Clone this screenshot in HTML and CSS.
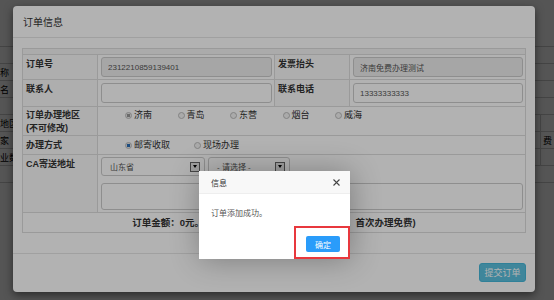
FILE: index.html
```html
<!DOCTYPE html>
<html>
  <head>
    <title>订单信息</title>
    <link rel="stylesheet" href="styles.css">
  </head>
  <body>
    <!-- page behind the modal -->
    <div class="page">
      <div class="row"><span class="l"></span></div>
      <div class="row"><span class="l">称</span></div>
      <div class="row"><span class="l">名</span></div>
      <div class="row"><span class="l"></span></div>
      <div class="row"><span class="l">地区</span><span class="r"></span></div>
      <div class="row"><span class="l">家</span><span class="r">费</span></div>
      <div class="row"><span class="l">业数</span><span class="r"></span></div>
      <div class="row"><span class="l"></span></div>
      <div class="row"><span class="l"></span></div>
    </div>
    <div class="backdrop"></div>

    <div class="modal">
      <div class="modal-header">订单信息</div>
      <div class="modal-body">
        <div class="order">
          <div class="cell head"></div>

          <div class="cell lbl">订单号</div>
          <div class="cell val"><input class="inp" value="2312210859139401" readonly></div>
          <div class="cell lbl">发票抬头</div>
          <div class="cell val"><input class="inp" value="济南免费办理测试" readonly></div>

          <div class="cell lbl">联系人</div>
          <div class="cell val"><input class="inp" value=""></div>
          <div class="cell lbl">联系电话</div>
          <div class="cell val"><input class="inp" value="13333333333"></div>

          <div class="cell lbl lbl-2">订单办理地区<br>(不可修改)</div>
          <div class="cell wide">
            <div class="opts opts-area">
              <label class="opt"><input type="radio" name="area" checked disabled>济南</label>
              <label class="opt"><input type="radio" name="area" disabled>青岛</label>
              <label class="opt"><input type="radio" name="area" disabled>东营</label>
              <label class="opt"><input type="radio" name="area" disabled>烟台</label>
              <label class="opt"><input type="radio" name="area" disabled>威海</label>
            </div>
          </div>

          <div class="cell lbl">办理方式</div>
          <div class="cell wide mid">
            <div class="opts opts-way">
              <label class="opt"><input type="radio" name="way" checked>邮寄收取</label>
              <label class="opt"><input type="radio" name="way">现场办理</label>
            </div>
          </div>

          <div class="cell lbl">CA寄送地址</div>
          <div class="cell wide addr">
            <div class="sels">
              <div class="sel sel-prov"><span>山东省</span><i class="arrow"></i></div>
              <div class="sel sel-city"><span>- 请选择 -</span><i class="arrow"></i></div>
            </div>
            <textarea class="area"></textarea>
          </div>

          <div class="cell total">订单金额：0元。（CA证书新办及年度服务费用合计，首次办理免费)</div>
        </div>
      </div>
      <div class="modal-footer">
        <button class="btn-submit">提交订单</button>
      </div>
    </div>

    <div class="shade"></div>

    <div class="layer">
      <div class="layer-title">
        信息
        <svg class="layer-close" width="7" height="7" viewBox="0 0 7 7">
          <path d="M0.5 0.5L6.5 6.5M6.5 0.5L0.5 6.5" stroke="#444" stroke-width="1.1" fill="none" />
        </svg>
      </div>
      <div class="layer-content">订单添加成功。</div>
      <div class="layer-btns"><button class="layer-btn">确定</button></div>
    </div>

    <div class="mark"></div>
  </body>
</html>
```

FILE: styles.css
```css
body {
  margin: 0;
  width: 554px;
  height: 300px;
  overflow: hidden;
  position: relative;
  background: #fff;
  font-family: "Liberation Sans", "Noto Sans CJK SC", sans-serif;
  color: #333;
}

/* Page behind */
.page {
  padding-top: 46px;
}

.row {
  display: flex;
  height: 17px;
  box-sizing: border-box;
  border-top: 1px solid #ccc;
  font-size: 9px;
  color: #000;
}

.row .l {
  white-space: nowrap;
  display: flex;
  align-items: center;
}

.row .r {
  margin-left: auto;
  width: 11px;
  border-left: 1px solid #ccc;
  padding-left: 2px;
  white-space: nowrap;
  display: flex;
  align-items: center;
}

.backdrop,
.shade {
  position: absolute;
  top: 0;
  left: 0;
  width: 100%;
  height: 100%;
}

.backdrop {
  background: rgba(0, 0, 0, 0.52);
}

.shade {
  background: rgba(0, 0, 0, 0.3);
}

/* Modal */
.modal {
  position: absolute;
  left: 13px;
  top: 6px;
  width: 522px;
  height: 286px;
  background: #fff;
  border-radius: 4px;
  box-shadow: 0 3px 9px rgba(0, 0, 0, 0.5);
  display: flex;
  flex-direction: column;
}

.modal-header {
  height: 32px;
  box-sizing: border-box;
  border-bottom: 1px solid #e5e5e5;
  padding: 0 10px;
  display: flex;
  align-items: center;
  font-size: 10px;
  color: #333;
}

.modal-body {
  flex: 1;
  padding: 10px 9px 0;
}

.modal-footer {
  border-top: 1px solid #e5e5e5;
  padding: 9px 9px 10px;
  display: flex;
  justify-content: flex-end;
}

.btn-submit {
  width: 47px;
  height: 19px;
  padding: 0;
  background: #5bc0de;
  border: 1px solid #46b8da;
  border-radius: 3px;
  color: #fff;
  font-family: "Noto Sans CJK SC", sans-serif;
  font-size: 9px;
}

/* Order table */
.order {
  display: grid;
  grid-template-columns: 75px 177px 75px 176px;
  grid-template-rows: 6px 25px 27px 29px 19px 58px 20px;
  border-top: 1px solid #ddd;
  border-left: 1px solid #ddd;
  width: 504px;
  box-sizing: border-box;
}

.cell {
  border-right: 1px solid #ddd;
  border-bottom: 1px solid #ddd;
  box-sizing: border-box;
}

.head {
  grid-column: span 4;
  background: #f5f5f5;
}

.lbl {
  background: #f9f9f9;
  font-weight: bold;
  font-size: 9px;
  line-height: 12px;
  padding: 3px 3px;
  color: #333;
}

.lbl-2 {
  padding-top: 2px;
  line-height: 13px;
}

.val {
  padding: 0 2px 0 3px;
  display: flex;
  align-items: center;
}

.inp {
  display: block;
  width: 100%;
  height: 20px;
  box-sizing: border-box;
  border: 1px solid #ccc;
  border-radius: 3px;
  padding: 0 6px;
  font-family: "Liberation Sans", "Noto Sans CJK SC", sans-serif;
  font-size: 8px;
  color: #555;
  background: #fff;
  outline: none;
}

.inp[readonly] {
  background: #eee;
}

.wide {
  grid-column: span 3;
}

.opts {
  display: flex;
  padding-left: 27px;
  font-size: 9px;
  line-height: 12px;
  color: #333;
}

.opts-area {
  padding-top: 2px;
}

.mid {
  display: flex;
  align-items: center;
}

.opt {
  display: flex;
  align-items: center;
  gap: 2px;
}

.opts-area .opt {
  width: 52.5px;
}

.opts-way .opt {
  width: 69px;
}

.opt input {
  appearance: none;
  width: 7px;
  height: 7px;
  margin: 0;
  border: 1px solid #bbb;
  border-radius: 50%;
  background: #f4f4f4;
  box-sizing: border-box;
}

.opt input:checked {
  background: radial-gradient(circle, #2a6fb8 0 1.6px, #e8e8e8 2px);
}

.opt input:checked:disabled {
  background: radial-gradient(circle, #999 0 1.6px, #eee 2px);
}

.addr {
  padding: 2px 2px 0 3px;
}

.sels {
  display: flex;
  gap: 3px;
}

.sel {
  height: 19px;
  box-sizing: border-box;
  border: 1px solid #ccc;
  border-radius: 3px;
  background: #fff;
  display: flex;
  align-items: center;
  padding: 0 4px 0 8px;
  font-size: 8px;
  color: #555;
}

.sel span {
  flex: 1;
}

.sel-prov {
  width: 104px;
}

.sel-city {
  width: 82px;
}

.arrow {
  width: 10px;
  height: 10px;
  box-sizing: border-box;
  border: 1px solid #666;
  background: #e6e6e6;
  display: flex;
  align-items: center;
  justify-content: center;
}

.arrow::after {
  content: "";
  border-left: 2.5px solid transparent;
  border-right: 2.5px solid transparent;
  border-top: 3px solid #000;
}

.area {
  display: block;
  margin-top: 7px;
  width: 100%;
  height: 27px;
  box-sizing: border-box;
  border: 1px solid #ccc;
  border-radius: 3px;
  resize: none;
  background: #fff;
}

.total {
  grid-column: span 4;
  text-align: center;
  font-weight: bold;
  font-size: 9.5px;
  line-height: 19px;
  color: #333;
  white-space: nowrap;
}

/* Layer dialog */
.layer {
  position: absolute;
  left: 199px;
  top: 171px;
  width: 151px;
  height: 88px;
  background: #fff;
  box-shadow: 1px 1px 30px rgba(0, 0, 0, 0.3);
  display: flex;
  flex-direction: column;
  font-family: "Noto Sans CJK SC", sans-serif;
}

.layer-title {
  position: relative;
  height: 23px;
  box-sizing: border-box;
  border-bottom: 1px solid #eee;
  background: #f8f8f8;
  padding-left: 12px;
  display: flex;
  align-items: center;
  font-size: 8px;
  color: #333;
}

.layer-close {
  position: absolute;
  right: 10px;
  top: 8px;
}

.layer-content {
  padding: 13px 12px 0;
  font-size: 8px;
  line-height: 12px;
  color: #555;
}

.layer-btns {
  margin-top: auto;
  padding: 0 10px 7px;
  display: flex;
  justify-content: flex-end;
}

.layer-btn {
  width: 34px;
  height: 16px;
  padding: 0;
  border: none;
  border-radius: 2px;
  background: #2a9cfa;
  color: #fff;
  font-family: "Noto Sans CJK SC", sans-serif;
  font-size: 8px;
}

/* highlight around the confirm button */
.mark {
  position: absolute;
  left: 294px;
  top: 226px;
  width: 56px;
  height: 33px;
  box-sizing: border-box;
  border: 2px solid #e8383d;
}
```
